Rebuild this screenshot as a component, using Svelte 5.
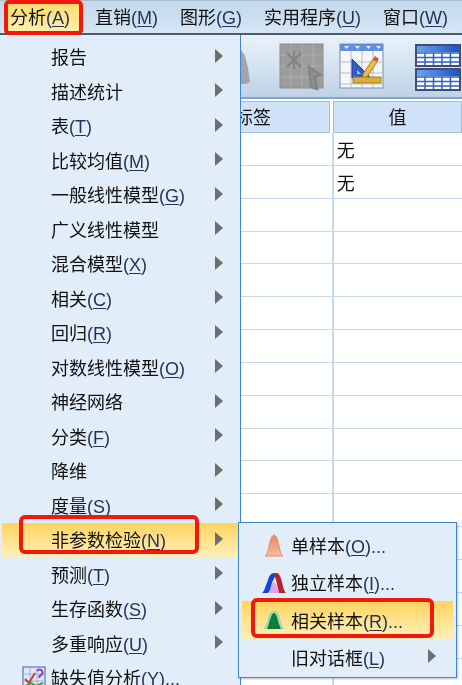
<script>
    const topMenus = [
        { name: '分析', key: 'A', active: true },
        { name: '直销', key: 'M' },
        { name: '图形', key: 'G' },
        { name: '实用程序', key: 'U' },
        { name: '窗口', key: 'W' }
    ];

    const items = [
        { name: '报告' },
        { name: '描述统计' },
        { name: '表', key: 'T' },
        { name: '比较均值', key: 'M' },
        { name: '一般线性模型', key: 'G' },
        { name: '广义线性模型' },
        { name: '混合模型', key: 'X' },
        { name: '相关', key: 'C' },
        { name: '回归', key: 'R' },
        { name: '对数线性模型', key: 'O' },
        { name: '神经网络' },
        { name: '分类', key: 'F' },
        { name: '降维' },
        { name: '度量', key: 'S' },
        { name: '非参数检验', key: 'N', active: true },
        { name: '预测', key: 'T' },
        { name: '生存函数', key: 'S' },
        { name: '多重响应', key: 'U' },
        { name: '缺失值分析', key: 'Y', dots: true, noArrow: true, icon: true }
    ];

    const subItems = [
        { name: '单样本', key: 'O', dots: true, icon: 'one' },
        { name: '独立样本', key: 'I', dots: true, icon: 'two' },
        { name: '相关样本', key: 'R', dots: true, icon: 'rel', active: true },
        { name: '旧对话框', key: 'L', arrow: true }
    ];

    const rows = Array.from({ length: 17 }, (_, i) => (i < 2 ? '无' : ''));
</script>

<div class="app">
    <nav class="menubar">
        {#each topMenus as m}
            <span class="top-item" class:active={m.active}><span class="text">{m.name}<span class="latin">(<u>{m.key}</u>)</span></span></span>
        {/each}
    </nav>

    <div class="toolbar">
        <svg class="tool blob" width="22" height="50" viewBox="0 0 22 50">
            <path d="M0 8h10l4 6 3 12 2 14-4 2H0z" fill="#a3a5a6" />
        </svg>
        <svg class="tool grey" width="46" height="48" viewBox="0 0 46 48">
            <rect x="1" y="1" width="43" height="44" fill="#9c9c9c" stroke="#8c8c8c" />
            <path d="M1 12h43M1 23h43M1 34h43M12 1v44M23 1v44M34 1v44" stroke="#adadad" fill="none" />
            <path d="M8 10l14 14M22 10L8 24M15 8v18M30 24l12 8-6 2 2 12-6-2z" stroke="#858585" stroke-width="2.500" fill="#8e8e8e" />
        </svg>
        <svg class="tool table" width="46" height="48" viewBox="0 0 46 48">
            <rect x="1" y="1" width="43" height="44" fill="#f4f6f8" stroke="#7d8da3" />
            <rect x="1" y="1" width="43" height="7" fill="#5f8fdc" />
            <path d="M5 3h5l-2.500 3zM16 3h5l-2.500 3zM27 3h5l-2.500 3zM37 3h5l-2.500 3z" fill="#e8f0ff" />
            <path d="M1 19h43M1 30h43M1 41h43M12 8v37M23 8v37M34 8v37" stroke="#b9bec6" fill="none" />
            <path d="M13 16l19 19H13z" fill="#2f5cc9" stroke="#1e3f97" />
            <path d="M18 27l4 4h-4z" fill="#b6cdf2" />
            <path d="M24 31l10-15 4 3-10 15-5 2z" fill="#eebb3f" stroke="#8a6a20" stroke-width=".8" />
            <path d="M34 16l2-3 4 3-2 3z" fill="#d9534a" />
            <rect x="14" y="34" width="28" height="6" fill="#dcae38" stroke="#8d6f1f" stroke-width=".8" />
        </svg>
        <svg class="tool" width="46" height="48" viewBox="0 0 46 48">
            <defs>
                <linearGradient id="head" x1="0" x2="1" y1="0" y2="0">
                    <stop offset="0" stop-color="#6aa3ea" />
                    <stop offset="1" stop-color="#1f55bd" />
                </linearGradient>
            </defs>
            {#each [0, 24] as y}
                <g transform="translate(0 {y})">
                    <rect x="1" y="1" width="44" height="21" fill="#fff" stroke="#3f4d78" stroke-width="2" />
                    <rect x="2" y="2" width="42" height="6" fill="url(#head)" />
                    <path d="M2 9h42M2 13.500h42M2 18h42" stroke="#2f62c8" stroke-width="1.500" fill="none" />
                    <path d="M10 9v12M18.500 9v12M27 9v12M35.500 9v12" stroke="#2f62c8" stroke-width="1.500" fill="none" />
                </g>
            {/each}
        </svg>
    </div>

    <div class="grid">
        <div class="head">
            <div class="head-cell label"><span class="text">标签</span></div>
            <div class="head-cell value"><span class="text">值</span></div>
        </div>
        {#each rows as r}
            <div class="row">
                <div class="cell label"></div>
                <div class="cell value"><span class="text">{r}</span></div>
            </div>
        {/each}
    </div>

    <div class="top-mark"></div>

    <div class="menu">
        {#each items as it}
            <div class="item" class:active={it.active}>
                {#if it.icon}
                    <svg class="item-icon" width="24" height="24" viewBox="0 0 24 24">
                        <rect x="1" y="1" width="22" height="22" fill="#dfe7f5" stroke="#3c5fa8" />
                        <path d="M1 8h22M1 15h22M8 1v22M15 1v22" stroke="#9fb2d4" fill="none" />
                        <path d="M3 13l4 4 6-10" stroke="#d03a2e" stroke-width="2" fill="none" />
                        <path d="M3 20l6-3 5 3 7-3" stroke="#3fa046" stroke-width="2" fill="none" />
                        <path d="M15 5q3-3 5 0t-2.500 5v2" stroke="#8a3fb0" stroke-width="2" fill="none" />
                    </svg>
                {/if}
                <span class="text">{it.name}{#if it.key}<span class="latin">(<u>{it.key}</u>){it.dots ? '...' : ''}</span>{/if}</span>
                {#if !it.noArrow}<span class="arrow"></span>{/if}
            </div>
        {/each}
        <div class="mark mark-item"></div>
    </div>

    <div class="submenu">
        {#each subItems as it}
            <div class="sub-item" class:active={it.active}>
                <span class="sub-icon">
                    {#if it.icon === 'one'}
                        <svg width="36" height="24" viewBox="0 0 36 24">
                            <defs>
                                <linearGradient id="orange" x1="0" x2="0" y1="0" y2="1">
                                    <stop offset="0" stop-color="#e6855e" />
                                    <stop offset="1" stop-color="#f6bda6" />
                                </linearGradient>
                            </defs>
                            <path d="M12 23c2-1 3-5 4-10 1-6 3-11 5-11s4 5 5 11c1 5 2 9 4 10z" fill="url(#orange)" stroke="#ea8d62" />
                        </svg>
                    {:else if it.icon === 'two'}
                        <svg width="36" height="24" viewBox="0 0 36 24">
                            <path d="M15 22c1-3 3-7 4-9 1-2 3-2 4 0 1 2 2 6 3 9z" fill="#e2a6de" />
                            <path d="M9 22c3-2 4-9 6-13 1-4 3-7 6-7l2 2c-2 3-4 7-5 11-1 4-2 6-3 7z" fill="#0f47d8" />
                            <path d="M21 2h3c3 1 4 5 5 9 1 5 2 9 4 11h-7c-1-4-2-10-3-13-1-4-2-5-2-7z" fill="#b8222c" />
                        </svg>
                    {:else if it.icon === 'rel'}
                        <svg width="36" height="24" viewBox="0 0 36 24">
                            <path d="M10 21c2-1 4-6 5-11 1-4 2-7 5-7h2c3 0 4 3 5 7 1 5 3 10 5 11z" fill="#9fdcae" />
                            <path d="M14 21c2-4 2-8 4-12 1-3 2-4 3-4s2 1 3 4c1 4 2 8 4 12z" fill="#0f7c3e" />
                        </svg>
                    {/if}
                </span>
                <span class="text">{it.name}<span class="latin">(<u>{it.key}</u>){it.dots ? '...' : ''}</span></span>
                {#if it.arrow}<span class="arrow"></span>{/if}
            </div>
        {/each}
        <div class="mark mark-sub"></div>
    </div>
</div>

<style>
    :global(body) {
        margin: 0;
        overflow: hidden;
    }

    .app {
        position: relative;
        width: 462px;
        height: 685px;
        overflow: hidden;
        background: #fff;
        font-family: "Noto Sans CJK SC", "Liberation Sans", sans-serif;
        font-size: 18px;
        color: #111;
    }

    .text {
        filter: blur(0.4px);
        white-space: nowrap;
    }

    .latin {
        font-family: "Liberation Sans", sans-serif;
        font-size: 18px;
        color: #25355a;
    }

    .menubar {
        display: flex;
        align-items: center;
        height: 32px;
        padding-left: 4px;
        background: linear-gradient(#c3d9ec, #d5e5f4);
        border-top: 1px solid #a9bdd0;
        border-bottom: 2px solid #4c5c6c;
    }

    .top-item {
        flex: none;
        padding: 0 6px;
        margin-right: 10px;
        white-space: nowrap;
        line-height: 30px;
    }

    .top-item.active {
        box-sizing: border-box;
        width: 79px;
        height: 32px;
        margin-right: 0;
        background: linear-gradient(#ffd868, #fff0b0);
    }

    .menubar .top-item:nth-child(2) {
        padding-left: 12px;
    }

    .toolbar {
        display: flex;
        align-items: center;
        height: 62px;
        padding-left: 231px;
        background: linear-gradient(#eaf2fb, #bfd2e6);
        border-bottom: 2px solid #7aa5d6;
    }

    .tool {
        flex: none;
        margin-right: 26px;
        margin-top: 1px;
    }

    .tool.grey {
        margin-right: 14px;
    }

    .tool.table {
        margin-right: 30px;
    }

    .tool:last-child {
        margin-top: 4px;
    }

    .grid {
        display: flex;
        flex-direction: column;
    }

    .head {
        display: flex;
        height: 32px;
        padding-top: 2px;
        gap: 3px;
        padding-left: 120px;
    }

    .head-cell {
        background: #cfe2f7;
        border: 1px solid #a5bdd6;
        box-sizing: border-box;
        height: 32px;
        line-height: 28px;
        text-align: center;
    }

    .head-cell.label {
        width: 211px;
        padding-left: 114px;
        text-align: left;
    }

    .head-cell.value {
        width: 130px;
    }

    .row {
        display: flex;
        height: 32.850px;
        box-sizing: border-box;
        border-bottom: 1px solid #c5d9ee;
        flex: none;
    }

    .cell.label {
        width: 336px;
        border-right: 2px solid #c5d9ee;
        box-sizing: border-box;
    }

    .cell.value {
        width: 126px;
        padding-left: 3px;
        line-height: 32px;
    }

    .top-mark {
        position: absolute;
        left: 4px;
        top: 0;
        box-sizing: border-box;
        width: 79px;
        height: 35px;
        border: 4px solid #f4170c;
        border-radius: 5px;
    }

    .menu {
        position: absolute;
        left: 0;
        top: 35px;
        width: 241px;
        height: 660px;
        box-sizing: border-box;
        padding: 4.500px 0 0 2px;
        background: #e2edfa;
        border-right: 1px solid #3f86cf;
    }

    .item {
        position: relative;
        display: flex;
        align-items: center;
        height: 34.500px;
        padding-left: 49px;
        margin-right: 1px;
    }

    .item .text {
        margin-bottom: 1px;
    }

    .item.active {
        background: linear-gradient(#ffd45e, #fff0ba);
    }

    .item-icon {
        position: absolute;
        left: 20px;
        top: 5px;
    }

    .arrow {
        position: absolute;
        left: 213px;
        top: 50%;
        margin-top: -8px;
        width: 0;
        height: 0;
        border-style: solid;
        border-width: 7px 0 7px 8px;
        border-color: transparent transparent transparent #6d6d6d;
    }

    .mark {
        position: absolute;
        box-sizing: border-box;
        border: 4px solid #f4170c;
        border-radius: 6px;
        pointer-events: none;
    }

    .mark-item {
        left: 19px;
        top: 480px;
        width: 180px;
        height: 39px;
    }

    .submenu {
        position: absolute;
        left: 238px;
        top: 522px;
        width: 219px;
        height: 156px;
        box-sizing: border-box;
        padding: 3px 3px;
        background: #e2edfa;
        border: 1px solid #3f86cf;
        box-shadow: 1px 1px 2px rgba(80, 100, 130, 0.4);
    }

    .sub-item {
        position: relative;
        display: flex;
        align-items: center;
        height: 37.500px;
        padding-left: 49px;
    }

    .sub-item.active {
        background: linear-gradient(#ffd45e, #fff0ba);
    }

    .sub-item .arrow {
        left: 186px;
    }

    .sub-icon {
        position: absolute;
        left: 11px;
        top: 7px;
        filter: blur(0.4px);
    }

    .mark-sub {
        left: 12px;
        top: 75px;
        width: 183px;
        height: 40px;
    }

    u {
        text-underline-offset: 2px;
    }
</style>
